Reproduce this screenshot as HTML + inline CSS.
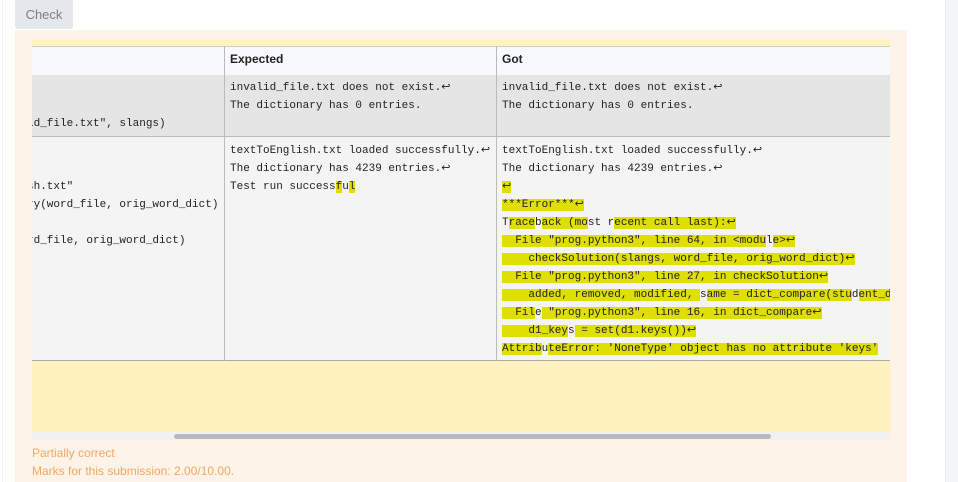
<!DOCTYPE html>
<html><head><meta charset="utf-8"><style>
body{margin:0;width:958px;height:482px;background:#fff;position:relative;overflow:hidden;font-family:"Liberation Sans",sans-serif}
.abs{position:absolute}
.btn{left:15px;top:0;width:58px;height:29px;background:#e5e8eb;border-radius:0 0 3px 3px;color:#7a8086;font-size:13px;line-height:29px;text-align:center}
.panel{left:15px;top:30px;width:892px;height:452px;background:#fdf3e8}
.inner{left:32px;top:40px;width:858px;height:392px;background:#fff2be;overflow:hidden}
.track{left:32px;top:432px;width:858px;height:8px;background:#f1f1f1}
.thumb{left:174px;top:434px;width:597px;height:5px;background:#b8b8be;border-radius:3px}
.mono{font-family:"Liberation Mono",monospace;font-size:11px;color:#222;line-height:18px;white-space:pre}
.h{background:#e0e000}
.msg{color:#f5a860;font-size:12px}
</style></head><body>
<div class="abs" style="left:2px;top:0;width:1px;height:482px;background:#eee"></div>
<div class="abs btn">Check</div>
<div class="abs panel"></div>
<div class="abs inner">
 <div class="abs" style="left:0;top:6px;width:858px;height:28px;background:#f8f9fb;border-top:1px solid #ccc;border-bottom:1px solid #bbb"></div>
 <div class="abs" style="left:0;top:35px;width:858px;height:61px;background:#e5e5e5;border-bottom:1px solid #bbb"></div>
 <div class="abs" style="left:0;top:97px;width:858px;height:223px;background:#f4f4f4;border-bottom:1px solid #aaa"></div>
 <div class="abs" style="left:192px;top:6px;width:1px;height:315px;background:#bbb"></div>
 <div class="abs" style="left:464px;top:6px;width:1px;height:315px;background:#bbb"></div>
 <div class="abs" style="left:198px;top:12px;font-size:12px;font-weight:bold;color:#222">Expected</div>
 <div class="abs" style="left:470px;top:12px;font-size:12px;font-weight:bold;color:#222">Got</div>
 <div class="abs mono" style="left:-5px;top:75px">ld_file.txt", slangs)</div>
 <div class="abs mono" style="left:-5px;top:138px">sh.txt"
ry(word_file, orig_word_dict)

rd_file, orig_word_dict)</div>
 <div class="abs mono" style="left:198px;top:39px">invalid_file.txt does not exist.↩
The dictionary has 0 entries.</div>
 <div class="abs mono" style="left:470px;top:39px">invalid_file.txt does not exist.↩
The dictionary has 0 entries.</div>
 <div class="abs mono" style="left:198px;top:102px">textToEnglish.txt loaded successfully.↩
The dictionary has 4239 entries.↩
Test run success<span class="h">f</span>u<span class="h">l</span></div>
 <div class="abs mono" style="left:470px;top:102px">textToEnglish.txt loaded successfully.↩
The dictionary has 4239 entries.↩
<span class="h">↩</span>
<span class="h">***Error***↩</span>
T<span class="h">race</span>b<span class="h">ack (mo</span>st r<span class="h">ecent call last):↩</span>
<span class="h">  File "prog.python3", line 64, in &lt;modu</span>l<span class="h">e&gt;↩</span>
<span class="h">    checkSolution</span><span class="h">(slangs, </span><span class="h">word_file, orig_word_dict)↩</span>
<span class="h">  File "prog.python3", line 27, in checkSolution↩</span>
<span class="h">    added, removed, modified, </span>s<span class="h">ame = dict_compare(stu</span>d<span class="h">ent_d</span>
<span class="h">  Fil</span>e<span class="h"> "prog.python3", line 16, in dict_compare↩</span>
<span class="h">    d1_key</span>s<span class="h"> = </span><span class="h">set(d1.keys())↩</span>
<span class="h">Attrib</span>u<span class="h">teError: 'NoneType' object has no attribute 'keys'</span></div>
</div>
<div class="abs track"></div>
<div class="abs thumb"></div>
<div class="abs msg" style="left:32px;top:446px">Partially correct</div>
<div class="abs msg" style="left:32px;top:464px">Marks for this submission: 2.00/10.00.</div>
<div class="abs" style="left:945px;top:0;width:13px;height:482px;background:#f4f5f6;border-left:1px solid #e6e6e6"></div>
</body></html>
